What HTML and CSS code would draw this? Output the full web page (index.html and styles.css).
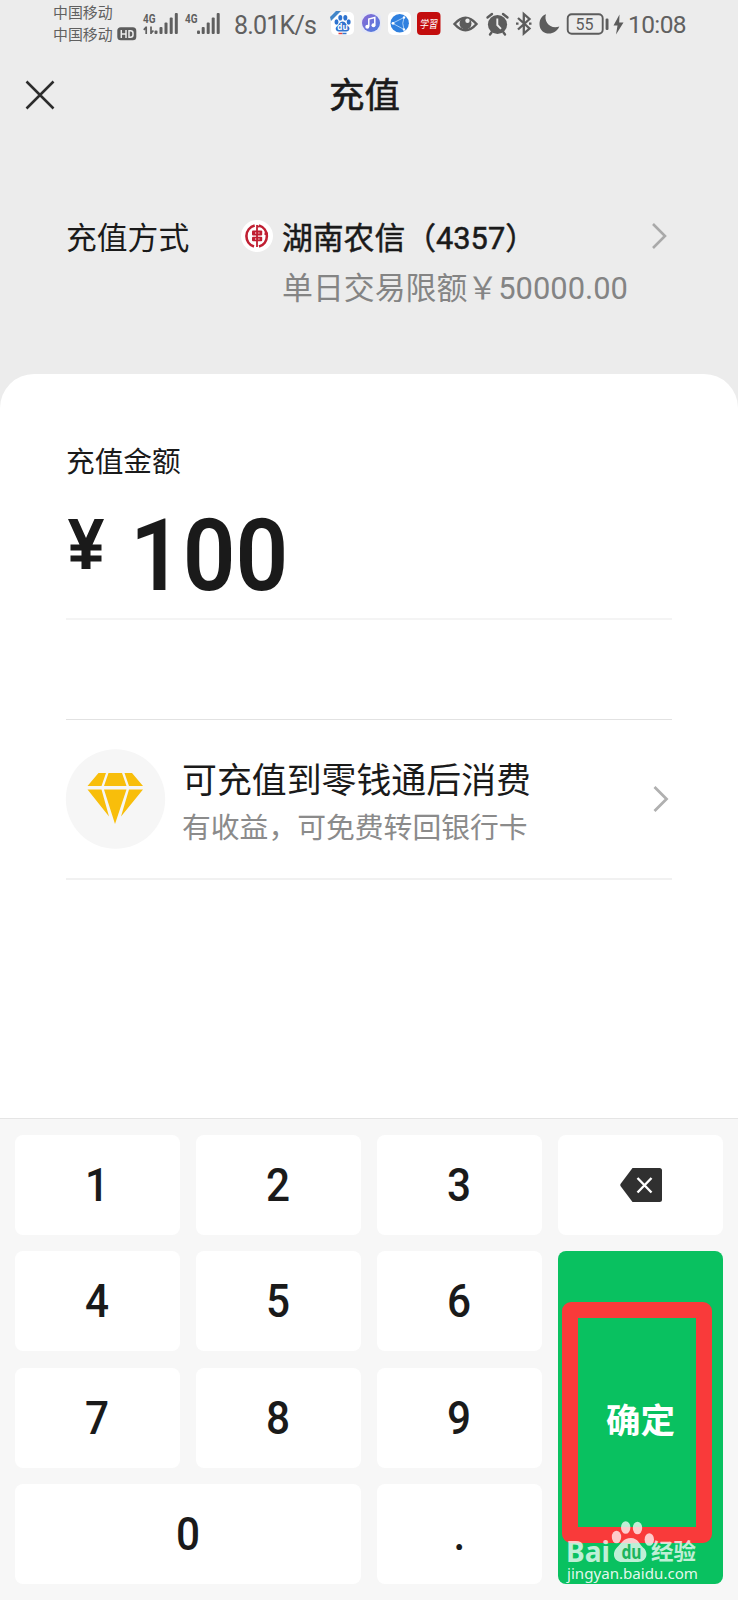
FILE: index.html
```html
<!DOCTYPE html>
<html lang="zh-CN">
<head>
<meta charset="utf-8">
<title>充值</title>
<link rel="stylesheet" href="styles.css">
</head>
<body>
<div class="screen">
  <div class="status">
    <div class="carriers">
      <div class="carrier">中国移动</div>
      <div class="carrier">中国移动
        <svg class="hd" width="20" height="14" viewBox="0 0 20 14"><rect x=".3" y=".3" width="19" height="13" rx="3.5" fill="#5c5c5c"/><path d="M4.3 3v8M9 3v8M4.3 7H9M12 3.7v6.6h1.500q2.500 0 2.500-2.200V6q0-2.300-2.500-2.300z" fill="none" stroke="#ececec" stroke-width="1.500"/></svg>
      </div>
    </div>
    <svg class="signals" width="78" height="24" viewBox="0 0 78 24" fill="#5f5f5f">
      <text class="net" x="0" y="11" textLength="12.500" lengthAdjust="spacingAndGlyphs">4G</text>
      <path d="M3.200 14.500V22M8 14.500V22M.8 17.800l2.400-2.600M8 21.300l2.400-2.800" stroke="#5f5f5f" stroke-width="1.700" fill="none"/>
      <rect x="11.500" y="18.500" width="3" height="3.500" rx="1"/><rect x="16.500" y="15" width="3" height="7" rx="1"/><rect x="21.500" y="10.500" width="3" height="11.500" rx="1"/><rect x="26.700" y="5.500" width="3" height="16.500" rx="1"/><rect x="31.800" y="1" width="3" height="21" rx="1"/>
      <text class="net" x="42" y="11" textLength="12.500" lengthAdjust="spacingAndGlyphs">4G</text>
      <rect x="54" y="18.500" width="3" height="3.500" rx="1"/><rect x="58.700" y="15" width="3" height="7" rx="1"/><rect x="63.700" y="10.500" width="3" height="11.500" rx="1"/><rect x="68.700" y="5.500" width="3" height="16.500" rx="1"/><rect x="73.700" y="1" width="3" height="21" rx="1"/>
    </svg>
    <div class="speed">8.01K/s</div>
    <svg class="apps" width="111" height="26" viewBox="0 0 111 26">
      <rect x="1" y="1" width="23" height="23" rx="5" fill="#fff"/>
      <path d="M0 6L6 0h5L1 10z" fill="#4185c8"/>
      <g fill="#2e73cf"><ellipse cx="6.500" cy="11" rx="2" ry="2.700"/><ellipse cx="10.300" cy="6.800" rx="2" ry="2.800"/><ellipse cx="15.300" cy="6.800" rx="2" ry="2.800"/><ellipse cx="18.700" cy="11" rx="2" ry="2.700"/><path d="M12.600 10.500c3 0 3.300 3 5.400 4.600 3 2.400 1 5.500-1.500 5.400H8.700c-2.700 0-4.300-3-1.500-5.400 2.100-1.600 2.400-4.600 5.400-4.600z"/></g>
      <text x="12.500" y="18.500" class="du-mini">du</text>
      <path d="M8.500 22.500h4" stroke="#d44" stroke-width="1.500"/><path d="M12.500 22.500h4" stroke="#37c" stroke-width="1.500"/>
      <defs><linearGradient id="m" x1="0" y1="0" x2="1" y2="1"><stop offset="0" stop-color="#8b69d3"/><stop offset="1" stop-color="#4a7de0"/></linearGradient></defs>
      <rect x="31" y="2" width="20" height="20" rx="5" fill="#e5e8f5"/><circle cx="41" cy="12" r="9" fill="url(#m)"/>
      <path d="M38.800 15.500V8l6-1.500v7.300" fill="none" stroke="#fff" stroke-width="1.500"/><circle cx="37.300" cy="15.700" r="2" fill="#fff"/><circle cx="43.500" cy="14.200" r="2" fill="#fff"/>
      <rect x="58" y="1" width="23" height="23" rx="5" fill="#fff"/><circle cx="69.700" cy="12.300" r="9.200" fill="#2f80df"/>
      <path d="M63 12L74 6.500M63 12.500L74 18.500M74 6.500Q71.500 12 74 18.500" fill="none" stroke="#b5d6f8" stroke-width=".9"/><circle cx="74" cy="6.500" r="1.200" fill="#fff"/><circle cx="63" cy="12.300" r="1.400" fill="#fff"/><circle cx="74" cy="18.500" r="1.200" fill="#fff"/>
      <rect x="87" y="1" width="23.500" height="23" rx="4" fill="#c30d0d"/><text class="xuexi" transform="translate(98.500 17) skewX(-8)" x="0" y="0" textLength="18" lengthAdjust="spacingAndGlyphs">学習</text>
    </svg>
    <svg class="sys" width="175" height="28" viewBox="0 0 175 28">
      <path d="M2.500 14Q13.500 1.500 24.500 14 13.500 26.500 2.500 14z" fill="none" stroke="#5c5c5c" stroke-width="2.500"/><circle cx="13.500" cy="13.500" r="6" fill="#5c5c5c"/><circle cx="15.500" cy="10.800" r="2.200" fill="#ececec"/>
      <circle cx="45.500" cy="14.500" r="9.600" fill="#5c5c5c"/><path d="M45.300 8.500v6.500l3.700 3.800" fill="none" stroke="#ececec" stroke-width="1.900"/><path d="M35.500 7.500l4.500-3.500M55.500 7.500L51 4M39.500 22.500l-1.500 2M51.500 22.500l1.500 2" stroke="#5c5c5c" stroke-width="2.400" stroke-linecap="round"/>
      <path d="M66 8l11.500 10.500L71.800 23.500V4l5.700 5L66 19.500M64 13.700h2.500M77 13.700h2.500" fill="none" stroke="#5c5c5c" stroke-width="2.300"/>
      <path d="M94 4.300c-2.500 7 4 15.500 13.300 12.300C103 27 87.500 25.500 87.500 14c0-5 2.800-8.500 6.500-9.700z" fill="#5c5c5c"/>
      <rect x="115.700" y="4.200" width="35" height="19.500" rx="4" fill="none" stroke="#5c5c5c" stroke-width="1.900"/><rect x="153.600" y="8.500" width="2.900" height="11.500" rx="1.200" fill="#5c5c5c"/><text class="batt" x="132.500" y="20" textLength="18" lengthAdjust="spacingAndGlyphs">55</text>
      <path d="M167.500 4.500L161.500 15.500h4l-1.500 9L171.500 12.500h-4.300z" fill="#5c5c5c"/>
    </svg>
    <div class="clock">10:08</div>
  </div>

  <div class="navbar">
    <svg class="close" width="30" height="30" viewBox="0 0 30 30"><path d="M1.500 1.500l27 27M28.500 1.500l-27 27" stroke="#2c2c2c" stroke-width="2.500"/></svg>
    <div class="title">充值</div>
  </div>

  <div class="method">
    <div class="method-label">充值方式</div>
    <svg class="bank-logo" width="32" height="32" viewBox="0 0 32 32"><circle cx="16" cy="16" r="16" fill="#fff"/><g fill="none" stroke="#c01f32"><path d="M13.700 5.500A11 11 0 0 0 13 26.600M18 5.500A11 11 0 0 1 18 26.600M27 13.800h-3.500" stroke-width="2.600"/><path d="M16 5v22M15.500 5.500l3 1.500" stroke-width="1.800"/></g><rect x="11" y="10.500" width="10.200" height="5" rx="1" fill="#c01f32"/><rect x="11" y="16.700" width="10.200" height="4.500" rx="1" fill="#c01f32"/><path d="M14 13h1.200M17.300 13h1.200M14 19h1.200M17.300 19h1.200" stroke="#fff" stroke-width="1"/></svg>
    <div class="bank">
      <div class="bank-name">湖南农信（4357）</div>
      <div class="bank-limit">单日交易限额￥50000.00</div>
    </div>
    <svg class="chevron" width="17" height="28" viewBox="0 0 17 28"><path d="M2 2l12 12L2 26" fill="none" stroke="#a9a9a9" stroke-width="2.600"/></svg>
  </div>

  <div class="sheet">
    <div class="amount-label">充值金额</div>
    <div class="amount"><svg class="yen" width="38" height="52" viewBox="0 0 38 52"><path d="M1 1h9.500L19 20 27.500 1H37L25.500 26.500H34.500v6H23.500v5h11v6H23.500v7.500h-9v-7.500H3.500v-6h11v-5H3.500v-6h9z" fill="#1a1a1a"/></svg><span class="figure">100</span></div>
    <div class="promo">
      <svg class="gem" width="100" height="100" viewBox="0 0 100 100"><circle cx="49.500" cy="50" r="49.700" fill="#f6f6f6"/><g fill="#f8be0b"><path d="M32.500 24h7.500l-4.500 13H21.500zM42.500 24h13.500l4.500 13H38zM58.500 24h7.500l11 13H63zM21.500 40.500h14l7.500 27zM38 40.500h22.500L49 75zM63 40.500h14L55 67.500z"/></g></svg>
      <div class="promo-text">
        <div class="promo-title">可充值到零钱通后消费</div>
        <div class="promo-sub">有收益，可免费转回银行卡</div>
      </div>
      <svg class="chevron" width="17" height="28" viewBox="0 0 17 28"><path d="M1.500 2l12 12L1.500 26" fill="none" stroke="#b0b0b0" stroke-width="2.800"/></svg>
    </div>
  </div>

  <div class="keypad">
    <div class="key"><span class="digit">1</span></div><div class="key"><span class="digit">2</span></div><div class="key"><span class="digit">3</span></div>
    <div class="key"><svg class="delete" width="42" height="34" viewBox="0 0 42 34"><path d="M12.500 0H39.500Q42 0 42 2.500v29Q42 34 39.500 34h-27L.5 18Q0 17 .5 16z" fill="#303030"/><path d="M17.500 10l14 14.500M31.500 10l-14 14.500" stroke="#fff" stroke-width="2.400"/></svg></div>
    <div class="key"><span class="digit">4</span></div><div class="key"><span class="digit">5</span></div><div class="key"><span class="digit">6</span></div>
    <div class="key confirm">确定
      <div class="marker"></div>
      <svg class="watermark" width="140" height="70" viewBox="0 0 140 70" fill="#fff">
        <g opacity=".74"><text class="wm-logo" x="1" y="41.500" textLength="44" lengthAdjust="spacingAndGlyphs">Bai</text>
        <ellipse cx="51.500" cy="17" rx="4.700" ry="6.300"/><ellipse cx="60.700" cy="7.500" rx="4.700" ry="6.300"/><ellipse cx="72.500" cy="8" rx="4.700" ry="6.300"/><ellipse cx="84.300" cy="19.500" rx="4.700" ry="6.300"/>
        <path d="M66 18c7 0 9 7 12 9.500 5 3.500 5.500 14-5 14.500H57c-9 0-10-10-5-14.500C56 24 58 18 66 18z"/>
        <text class="wm-cn" x="86" y="39" textLength="45" lengthAdjust="spacingAndGlyphs">经验</text></g>
        <text class="wm-du" x="66.500" y="38.500" textLength="20" lengthAdjust="spacingAndGlyphs">du</text>
        <text class="wm-url" x="2" y="59" textLength="131" lengthAdjust="spacingAndGlyphs">jingyan.baidu.com</text>
      </svg>
    </div>
    <div class="key"><span class="digit">7</span></div><div class="key"><span class="digit">8</span></div><div class="key"><span class="digit">9</span></div>
    <div class="key zero"><span class="digit">0</span></div><div class="key"><span class="digit">.</span></div>
  </div>
</div>
</body>
</html>
```
FILE: styles.css
```css
* { box-sizing: border-box; }
body { margin: 0; }
svg { display: block; flex: none; overflow: visible; }

.screen {
  width: 738px;
  height: 1600px;
  display: flex;
  flex-direction: column;
  overflow: hidden;
  background: #ececec;
  color: #1a1a1a;
  font-family: Roboto, "Noto Sans CJK SC", sans-serif;
  white-space: nowrap;
}

.status {
  height: 48px;
  display: flex;
  align-items: flex-start;
  padding-left: 53px;
  color: #606060;
}
.carriers { width: 90px; padding-top: 1px; font-family: "Noto Sans CJK SC", sans-serif; }
.carrier { display: flex; align-items: center; gap: 4px; height: 22px; font-size: 14.9px; line-height: 22px; }
.signals { margin-top: 12px; }
.net { font: 700 13px Roboto, sans-serif; }
.speed { width: 97px; padding-left: 13px; margin-top: 10px; font: 400 25px/32px Roboto, sans-serif; letter-spacing: -.8px; }
.apps { margin: 11px 0 0 12px; }
.du-mini { font: 700 8px "Noto Sans", sans-serif; fill: #fff; text-anchor: middle; }
.xuexi { font: 400 11px "Noto Sans CJK SC", sans-serif; fill: #fff; text-anchor: middle; }
.sys { margin: 10px 0 0 11px; }
.batt { font: 400 17px Roboto, sans-serif; fill: #5c5c5c; text-anchor: middle; }
.clock { margin: 9px 0 0 1px; font: 400 24.500px/32px Roboto, sans-serif; letter-spacing: -.6px; }

.navbar { height: 94px; display: flex; align-items: center; padding: 0 0 1px 25px; }
.close { margin-right: 274px; }
.title { padding-top: 2px; font-size: 35.500px; line-height: 40px; -webkit-text-stroke: .6px #1a1a1a; }

.method { height: 232px; display: flex; align-items: flex-start; padding: 75px 0 0 66px; }
.method-label { width: 175px; padding-top: 2px; font-size: 30.800px; line-height: 40px; }
.bank-logo { margin-top: 3px; }
.bank { width: 378px; padding: 2px 0 0 9px; }
.bank-name { font-size: 30.800px; line-height: 40px; -webkit-text-stroke: .5px #1a1a1a; }
.bank-limit { margin-top: 10px; font-size: 30.900px; line-height: 40px; color: #848484; }
.method .chevron { margin-top: 5px; }

.sheet { height: 744px; padding: 68px 66px 0; border-radius: 34px 34px 0 0; background: #fff; }
.amount-label { font-size: 28.700px; line-height: 40px; }
.amount { height: 138px; display: flex; align-items: flex-start; padding: 36px 0 0 1px; border-bottom: 2px solid #f4f4f4; }
.figure { margin: -17px 0 0 24.500px; font-size: 101px; line-height: 110px; font-weight: 600; transform: scaleX(.915); transform-origin: 0 50%; }
.promo { height: 161px; display: flex; align-items: center; margin-top: 99px; border-top: 1.500px solid #e2e2e2; border-bottom: 2px solid #f1f1f1; }
.promo-text { width: 487px; padding: 9px 0 0 16px; }
.promo-title { font-size: 34.900px; line-height: 48px; }
.promo-sub { font-size: 28.800px; line-height: 44px; color: #8b8b8b; }

.keypad {
  height: 482px;
  display: grid;
  grid-template-columns: repeat(4, 1fr);
  grid-template-rows: repeat(4, 100px);
  gap: 16.400px;
  padding: 16px 15.300px;
  border-top: 1.500px solid #e5e5e5;
  background: #f7f7f7;
}
.key { display: flex; align-items: center; justify-content: center; border-radius: 8px; background: #fff; font-size: 46px; line-height: 60px; font-weight: 500; }
.digit { transform: scaleX(.92); }
.delete { margin-left: 1px; }
.zero { grid-column: span 2; }
.confirm { position: relative; grid-row: span 3; padding-top: 6px; background: #09c160; color: #fff; font-size: 34.500px; font-weight: 700; }
.marker { position: absolute; left: 4px; top: 51px; width: 150px; height: 241px; border: 16.500px solid #f93a3a; border-radius: 9px; }
.watermark { position: absolute; left: 7px; top: 269px; }
.wm-logo { font: 700 29px "Noto Sans", sans-serif; }
.wm-cn { font: 700 22px "Noto Sans CJK SC", sans-serif; }
.wm-du { font: 700 19px "Noto Sans", sans-serif; fill: #1bb45c; text-anchor: middle; }
.wm-url { font: 400 15px "Noto Sans", sans-serif; fill-opacity: .9; }
```
